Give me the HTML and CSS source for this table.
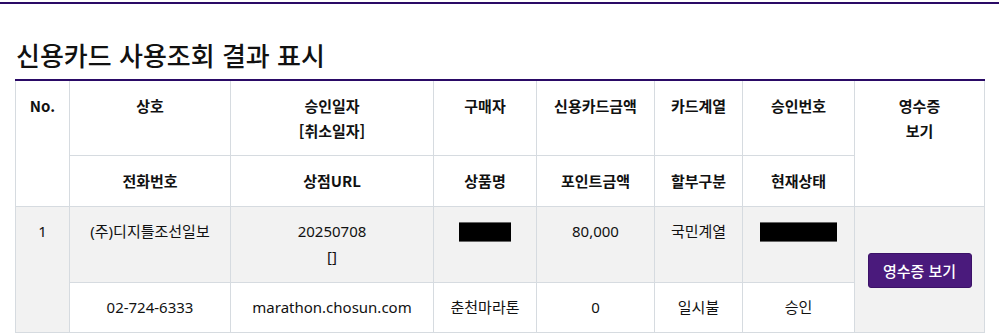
FILE: index.html
```html
<!DOCTYPE html>
<html lang="ko">
<head>
<meta charset="utf-8">
<link rel="stylesheet" href="styles.css">
</head>
<body>
<div class="page">
  <h2 class="title">신용카드 사용조회 결과 표시</h2>
  <table class="result">
    <colgroup>
      <col style="width:54px">
      <col style="width:161px">
      <col style="width:203px">
      <col style="width:103px">
      <col style="width:118px">
      <col style="width:88px">
      <col style="width:112px">
      <col style="width:130px">
    </colgroup>
    <thead>
      <tr class="head1">
        <th rowspan="2">No.</th>
        <th>상호</th>
        <th>승인일자<br>[취소일자]</th>
        <th>구매자</th>
        <th>신용카드금액</th>
        <th>카드계열</th>
        <th>승인번호</th>
        <th rowspan="2">영수증<br>보기</th>
      </tr>
      <tr class="head2">
        <th>전화번호</th>
        <th>상점URL</th>
        <th>상품명</th>
        <th>포인트금액</th>
        <th>할부구분</th>
        <th>현재상태</th>
      </tr>
    </thead>
    <tbody>
      <tr class="gray">
        <td rowspan="2">1</td>
        <td>(주)디지틀조선일보</td>
        <td>20250708<br>[]</td>
        <td><span class="mask mask-sm"></span></td>
        <td>80,000</td>
        <td>국민계열</td>
        <td><span class="mask mask-lg"></span></td>
        <td rowspan="2" class="btn-cell"><button class="receipt">영수증 보기</button></td>
      </tr>
      <tr class="last">
        <td>02-724-6333</td>
        <td>marathon.chosun.com</td>
        <td>춘천마라톤</td>
        <td>0</td>
        <td>일시불</td>
        <td>승인</td>
      </tr>
    </tbody>
  </table>
</div>
</body>
</html>
```

FILE: styles.css
```css
html, body {
  margin: 0;
  padding: 0;
  background: #fff;
}
body {
  font-family: "Noto Sans CJK KR", "Noto Sans", sans-serif;
  color: #111;
}
.page {
  margin-top: 2px;
  border-top: 2px solid #2a0a66;
  padding: 0 15px;
}
.title {
  margin: 0;
  padding: 32px 0 0 1px;
  font-size: 26px;
  line-height: 38px;
  font-weight: 500;
  color: #111;
  height: 43px;
}
.result {
  width: 969px;
  table-layout: fixed;
  border-collapse: collapse;
  border-top: 2px solid #2a0a66;
  font-size: 15px;
  line-height: 25px;
}
.result th, .result td {
  border: 1px solid #d6dbe0;
  padding: 12px 4px 13px;
  text-align: center;
  vertical-align: top;
}
.result .head1 th {
  border-top: 2px solid #2a0a66;
  padding-bottom: 12px;
}
.result .last td {
  padding-bottom: 12px;
}
.result th {
  font-weight: 700;
  color: #111;
}
.result td {
  font-family: "Noto Sans", "Noto Sans CJK KR", sans-serif;
  color: #111;
}
.gray td {
  background: #f2f2f2;
}
.result td.btn-cell {
  background: #f2f2f2;
  vertical-align: middle;
}
.mask {
  display: inline-block;
  vertical-align: middle;
  height: 18px;
  background: #000;
  border-top: 1px solid #666;
  border-bottom: 1px solid #666;
  margin-top: -2px;
}
.mask-sm { width: 52px; }
.mask-lg { width: 77px; }
.receipt {
  width: 104px;
  height: 35px;
  background: #4a1a7c;
  color: #fff;
  border: 1px solid #3c1268;
  border-radius: 3px;
  font-family: "Noto Sans CJK KR", sans-serif;
  font-size: 15px;
  font-weight: 500;
  padding: 0;
  margin-top: 2px;
}
```
